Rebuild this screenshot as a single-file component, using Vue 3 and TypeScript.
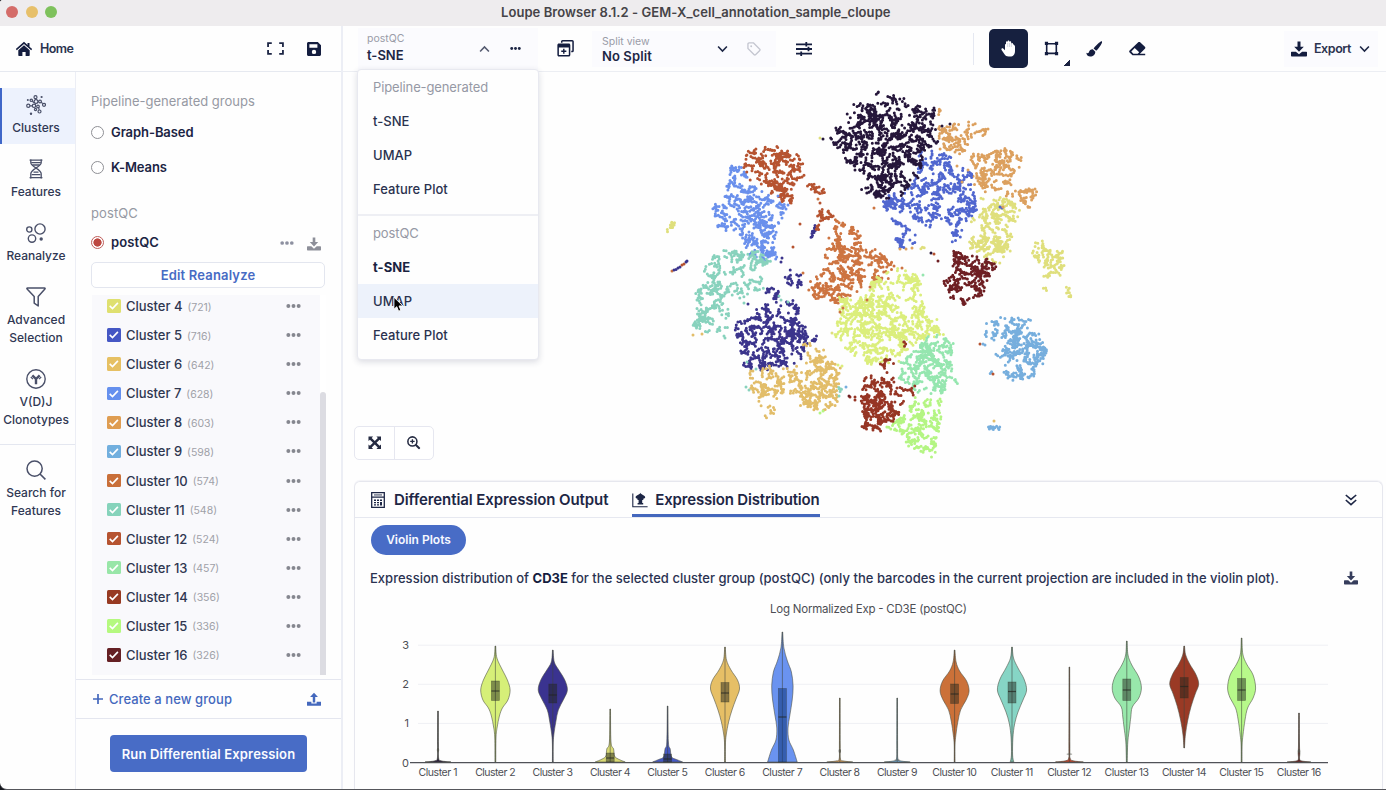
<script setup lang="ts">
interface NavItem { icon: string; lines: string[]; active?: boolean; apart?: boolean }
interface Cluster { id: number; count: number; color: string }
type Pt = [number, number]
interface Region { color: string; density: number; poly: Pt[]; hole?: [number, number, number] }
interface Violin { id: number; color: string; shape: Pt[]; box?: [number, number, number]; dot?: number }

const nav: NavItem[] = [
  { icon: 'clusters', lines: ['Clusters'], active: true },
  { icon: 'features', lines: ['Features'] },
  { icon: 'reanalyze', lines: ['Reanalyze'] },
  { icon: 'filter', lines: ['Advanced', 'Selection'] },
  { icon: 'vdj', lines: ['V(D)J', 'Clonotypes'] },
  { icon: 'search', lines: ['Search for', 'Features'], apart: true },
]

const clusters: Cluster[] = [
  { id: 4, count: 721, color: '#dfe070' },
  { id: 5, count: 716, color: '#4557c4' },
  { id: 6, count: 642, color: '#e6c063' },
  { id: 7, count: 628, color: '#6590ee' },
  { id: 8, count: 603, color: '#df9d52' },
  { id: 9, count: 598, color: '#72afde' },
  { id: 10, count: 574, color: '#c96f39' },
  { id: 11, count: 548, color: '#86d3bb' },
  { id: 12, count: 524, color: '#b65330' },
  { id: 13, count: 457, color: '#98e6a8' },
  { id: 14, count: 356, color: '#973a22' },
  { id: 15, count: 336, color: '#b5f97f' },
  { id: 16, count: 326, color: '#652024' },
]

const C: Record<number, string> = {
  1: '#25163a', 2: '#dbee7c', 3: '#3b348c', 4: '#dfdf7c', 5: '#5066cf', 6: '#e2bd69', 7: '#6a90ec', 8: '#dca05e',
  9: '#76aedd', 10: '#cd7441', 11: '#88d2bd', 12: '#b65330', 13: '#95e6af', 14: '#963524', 15: '#b4f583', 16: '#6e1f23',
}

const regions: Region[] = [
  { color: C[7], density: 0.12, poly: [[730, 167], [740, 165], [750, 180], [763, 195], [788, 205], [778, 220], [774, 240], [782, 262], [776, 268], [747, 253], [738, 230], [715, 229], [709, 203], [725, 200], [728, 183]] },
  { color: C[12], density: 0.13, poly: [[742, 163], [753, 148], [773, 146], [793, 152], [805, 168], [803, 180], [790, 187], [794, 202], [783, 205], [778, 192], [767, 193], [750, 177]] },
  { color: C[12], density: 0.16, poly: [[806, 182], [815, 183], [827, 190], [824, 195], [810, 191]] },
  { color: C[12], density: 0.17, poly: [[820, 208], [833, 210], [834, 217], [822, 221], [816, 219]] },
  { color: C[10], density: 0.2, poly: [[833, 216], [846, 224], [844, 227], [832, 219]] },
  { color: C[3], density: 0.12, poly: [[811, 224], [815, 221], [816, 230], [809, 242], [805, 238]] },
  { color: C[12], density: 0.12, poly: [[818, 222], [822, 230], [821, 239], [816, 230]] },
  { color: C[11], density: 0.095, poly: [[710, 258], [727, 250], [760, 252], [774, 262], [766, 275], [770, 290], [757, 292], [735, 298], [727, 328], [715, 332], [693, 329], [698, 316], [697, 290], [712, 283], [704, 270]] },
  { color: C[3], density: 0.125, poly: [[753, 317], [765, 303], [793, 299], [800, 310], [797, 323], [817, 338], [803, 350], [797, 363], [763, 370], [743, 367], [740, 343], [733, 332], [738, 322]] },
  { color: C[3], density: 0.12, poly: [[763, 289], [775, 286], [783, 294], [778, 299], [764, 297]] },
  { color: C[3], density: 0.08, poly: [[783, 274], [790, 268], [803, 275], [802, 288], [792, 290]] },
  { color: C[6], density: 0.115, poly: [[750, 373], [770, 366], [807, 369], [803, 342], [818, 343], [840, 370], [841, 385], [835, 409], [820, 412], [803, 405], [800, 393], [773, 393], [777, 408], [767, 417], [757, 403], [750, 390]] },
  { color: C[10], density: 0.12, poly: [[835, 226], [860, 230], [870, 247], [894, 263], [890, 277], [863, 287], [840, 303], [814, 301], [808, 290], [810, 280], [827, 268], [826, 250]] },
  { color: C[8], density: 0.08, poly: [[937, 108], [945, 110], [943, 119], [938, 118]] },
  { color: C[8], density: 0.12, poly: [[939, 127], [963, 122], [990, 130], [993, 137], [970, 140], [963, 154], [938, 147]] },
  { color: C[8], density: 0.11, poly: [[968, 159], [997, 147], [1020, 150], [1022, 160], [1013, 177], [1018, 203], [1010, 205], [1005, 188], [987, 195], [975, 183]] },
  { color: C[8], density: 0.15, poly: [[1018, 191], [1037, 187], [1038, 197], [1030, 209], [1019, 199]] },
  { color: C[5], density: 0.105, poly: [[921, 153], [943, 150], [953, 160], [975, 177], [977, 213], [963, 224], [957, 243], [953, 243], [953, 224], [927, 226], [907, 213], [887, 210], [880, 202], [903, 190], [917, 175]] },
  { color: C[5], density: 0.12, poly: [[889, 217], [902, 223], [915, 235], [917, 249], [897, 249], [895, 238], [903, 232]], hole: [906, 243, 3.5] },
  { color: C[1], density: 0.12, poly: [[881, 91], [897, 96], [910, 105], [937, 109], [933, 123], [938, 143], [922, 153], [918, 178], [902, 193], [885, 201], [860, 190], [865, 177], [843, 160], [841, 147], [829, 141], [829, 130], [847, 123], [847, 106], [868, 104], [872, 95]] },
  { color: C[4], density: 0.115, poly: [[981, 197], [1007, 198], [1020, 210], [1013, 233], [1010, 250], [997, 270], [980, 255], [966, 243], [973, 220]] },
  { color: C[4], density: 0.13, poly: [[1027, 243], [1042, 240], [1050, 251], [1062, 250], [1065, 267], [1053, 280], [1046, 277], [1037, 260]] },
  { color: C[4], density: 0.22, poly: [[1065, 287], [1069, 287], [1071, 298], [1068, 299]] },
  { color: C[4], density: 0.18, poly: [[1043, 287], [1047, 287], [1046, 292], [1043, 291]] },
  { color: C[4], density: 0.3, poly: [[666, 231], [672, 222], [676, 223], [669, 234]] },
  { color: C[4], density: 0.12, poly: [[920, 246], [928, 246], [927, 250], [920, 249]] },
  { color: C[16], density: 0.14, poly: [[950, 253], [963, 251], [992, 261], [995, 271], [985, 281], [984, 293], [963, 305], [950, 297], [943, 281], [956, 270]], hole: [968, 292, 6] },
  { color: C[2], density: 0.125, poly: [[873, 280], [897, 268], [923, 280], [920, 297], [933, 320], [946, 332], [913, 342], [897, 360], [870, 365], [860, 357], [843, 347], [833, 330], [843, 317], [838, 299], [867, 297]] },
  { color: C[13], density: 0.125, poly: [[898, 359], [915, 347], [930, 337], [952, 335], [950, 360], [958, 383], [943, 400], [920, 393], [897, 377]] },
  { color: C[15], density: 0.125, poly: [[915, 398], [944, 400], [940, 427], [936, 443], [932, 457], [903, 443], [900, 430], [887, 433], [890, 420], [907, 413]] },
  { color: C[14], density: 0.14, poly: [[865, 377], [887, 376], [907, 387], [903, 413], [883, 432], [861, 427], [863, 407], [861, 393]] },
  { color: C[14], density: 0.07, poly: [[878, 361], [893, 357], [897, 375], [886, 372]] },
  { color: C[14], density: 0.07, poly: [[908, 383], [914, 383], [920, 395], [910, 396]] },
  { color: C[14], density: 0.06, poly: [[894, 346], [904, 341], [914, 345], [902, 348]] },
  { color: C[9], density: 0.135, poly: [[988, 321], [1010, 318], [1029, 319], [1043, 340], [1047, 357], [1035, 373], [1020, 385], [1007, 379], [1005, 357], [993, 355], [1010, 339], [986, 337]] },
  { color: C[9], density: 0.1, poly: [[990, 369], [994, 369], [994, 376], [990, 376]] },
  { color: C[9], density: 0.3, poly: [[988, 426], [1000, 426], [1001, 430], [988, 430]] },
  { color: C[11], density: 0.12, poly: [[838, 386], [844, 387], [842, 396], [837, 398]] },
]

const strays: [number, number, string][] = [
  [672, 271, C[10]], [674, 270, C[3]], [676, 269.5, C[3]], [678, 268, C[3]], [680, 267, C[3]], [682, 265, C[12]], [684, 264, C[12]], [686, 262, C[3]], [687, 261, C[3]],
  [820, 138, C[4]], [823, 139, C[1]], [800, 224, C[12]], [793, 247, C[12]], [818, 199, C[10]], [820, 203, C[12]], [803, 273, C[10]],
  [942, 126, C[1]], [950, 124, C[1]], [874, 208, C[10]], [931, 253, C[1]], [938, 261, C[16]], [934, 254, C[12]], [832, 333, C[4]],
  [850, 397, C[14]], [855, 400, C[14]], [855, 397, C[14]], [849, 396, C[16]], [993, 374, C[12]], [980, 344, C[12]], [983, 344, C[9]],
  [985, 345, C[9]], [994, 421, C[6]], [693, 335, C[6]], [702, 334, C[6]], [725, 338, C[11]], [724, 336, C[11]], [744, 303, C[11]],
  [748, 304, C[3]], [820, 413, C[15]], [823, 411, C[15]], [1000, 207, C[5]], [1002, 208, C[5]], [1003, 207, C[8]], [962, 182, C[8]],
  [957, 166, C[8]], [968, 170, C[8]], [782, 258, C[3]], [781, 262, C[3]], [846, 387, C[9]], [746, 387, C[11]], [749, 390, C[11]],
  [870, 287, C[10]], [867, 300, C[10]], [843, 308, C[10]], [894, 266, C[10]], [902, 268, C[10]], [840, 312, C[10]], [923, 275, C[13]],
  [900, 249, C[8]], [906, 249, C[8]], [912, 248, C[8]], [788, 205, C[7]], [786, 209, C[7]], [782, 218, C[7]], [778, 196, C[7]],
  [838, 365, C[2]], [842, 366, C[2]], [756, 369, C[11]], [747, 362, C[11]], [779, 296, C[11]], [781, 300, C[11]], [788, 302, C[11]],
]

function rng(seed: number): () => number {
  let s = seed >>> 0
  return () => {
    s = (s + 0x6d2b79f5) >>> 0
    let t = s
    t = Math.imul(t ^ (t >>> 15), t | 1)
    t ^= t + Math.imul(t ^ (t >>> 7), t | 61)
    return ((t ^ (t >>> 14)) >>> 0) / 4294967296
  }
}

function inside(x: number, y: number, p: Pt[]): boolean {
  let hit = false
  for (let i = 0, j = p.length - 1; i < p.length; j = i++) {
    const [xi, yi] = p[i]
    const [xj, yj] = p[j]
    if (yi > y !== yj > y && x < ((xj - xi) * (y - yi)) / (yj - yi) + xi) hit = !hit
  }
  return hit
}

function area(p: Pt[]): number {
  let a = 0
  for (let i = 0, j = p.length - 1; i < p.length; j = i++) a += p[j][0] * p[i][1] - p[i][0] * p[j][1]
  return Math.abs(a / 2)
}

/* Cells sit in short winding strands with a slightly ragged cluster edge. */
function scatter(r: Region, seed: number): string {
  const rand = rng(seed * 7919 + 13)
  const xs = r.poly.map((q) => q[0])
  const ys = r.poly.map((q) => q[1])
  const x0 = Math.min(...xs)
  const y0 = Math.min(...ys)
  const w = Math.max(...xs) - x0
  const h = Math.max(...ys) - y0
  const size = area(r.poly)
  const rag = size > 500 ? 5 : 1
  const total = Math.round(size * r.density)
  let d = ''
  let n = 0
  let guard = 0
  while (n < total && guard++ < 20000) {
    let x = x0 + rand() * w
    let y = y0 + rand() * h
    let dir = rand() * Math.PI * 2
    const len = 1 + Math.floor(rand() * 5)
    for (let k = 0; k < len && n < total; k++) {
      const holed = r.hole && Math.hypot(x - r.hole[0], y - r.hole[1]) < r.hole[2]
      if (inside(x + (rand() - 0.5) * rag, y + (rand() - 0.5) * rag, r.poly) && !holed) {
        d += `M${x.toFixed(1)} ${y.toFixed(1)}h0`
        n++
      }
      dir += (rand() - 0.5) * 2.2
      x += Math.cos(dir) * 2.3
      y += Math.sin(dir) * 2.3
    }
  }
  return d
}
const layers = regions.map((r, i) => ({ color: r.color, d: scatter(r, i + 1) }))

const violins: Violin[] = [
  { id: 1, color: '#25163a', shape: [[711, 0.3], [745, 0.4], [758, 0.6], [760.8, 3], [762, 13]], dot: 750 },
  { id: 2, color: '#d6ef78', shape: [[646, 0.3], [658, 1.5], [670, 7], [680, 12], [690, 14.7], [700, 12.5], [708, 7], [716, 4], [727, 1.8], [738, 0.6], [762, 0.4]], box: [681, 700.5, 691] },
  { id: 3, color: '#3a3390', shape: [[650, 0.3], [662, 1.5], [670, 6], [680, 12], [690, 14.6], [699, 11], [710, 5.5], [722, 3], [735, 1], [745, 0.4], [762, 0.4]], box: [684, 703, 695] },
  { id: 4, color: '#d9da75', shape: [[709, 0.3], [742, 0.8], [749, 3.4], [756, 4.3], [759, 8], [762, 15]], box: [753, 762, 758] },
  { id: 5, color: '#4659c6', shape: [[706, 0.3], [742, 0.8], [749, 2.6], [757, 4], [759.5, 9], [762, 15]], box: [754, 762, 759] },
  { id: 6, color: '#e6bf66', shape: [[647, 0.3], [660, 1.5], [670, 6], [680, 12.5], [689, 14.5], [699, 11], [710, 7], [722, 3.6], [735, 1.2], [745, 0.4], [762, 0.4]], box: [682.5, 702, 693] },
  { id: 7, color: '#6a93f0', shape: [[632, 0.3], [648, 1.5], [661, 5], [672, 9], [686, 10.7], [700, 9.8], [715, 7.5], [728, 5.6], [740, 6.5], [750, 11], [762, 14.8]], box: [688.5, 762, 717] },
  { id: 8, color: '#dca05e', shape: [[698, 0.3], [745, 0.4], [759, 0.7], [761, 4], [762, 13]], dot: 751 },
  { id: 9, color: '#76aedd', shape: [[698, 0.3], [745, 0.4], [759, 0.8], [761, 4], [762, 13]], dot: 760 },
  { id: 10, color: '#cb7139', shape: [[650, 0.3], [662, 1.5], [671, 5], [681, 12], [691, 14.5], [700, 11.5], [710, 6], [722, 3.2], [735, 1.3], [745, 0.4], [762, 0.4]], box: [684, 703.5, 694] },
  { id: 11, color: '#86d5c5', shape: [[647, 0.3], [658, 1.5], [668, 6], [679, 12], [690, 14.6], [700, 11], [712, 6], [724, 2.6], [738, 0.9], [755, 0.6], [762, 1.8]], box: [682, 703, 691.5] },
  { id: 12, color: '#c0442d', shape: [[667, 0.3], [745, 0.5], [758, 0.7], [760.8, 4], [762, 14]], dot: 754 },
  { id: 13, color: '#98e8ab', shape: [[641, 0.3], [655, 1.2], [665, 5], [677, 12], [688, 14.6], [698, 12], [707, 5.5], [717, 4], [727, 2.8], [742, 1], [762, 0.4]], box: [679, 700.5, 690] },
  { id: 14, color: '#9a3a25', shape: [[646, 0.3], [655, 1.5], [664, 5.5], [674, 11.5], [684, 14.5], [694, 11], [706, 7], [720, 3.6], [735, 1.2], [748, 0.3]], box: [677.5, 698, 686.5] },
  { id: 15, color: '#b7f98a', shape: [[638, 0.3], [654, 1.2], [664, 5], [675, 11.5], [688, 14], [698, 11.5], [708, 6], [720, 3.4], [735, 1.4], [745, 0.5], [762, 0.4]], box: [678.5, 700.5, 690] },
  { id: 16, color: '#6e1f23', shape: [[713, 0.3], [745, 0.5], [753, 0.9], [759, 0.6], [761, 3], [762, 12]], dot: 751 },
]

const cx = (id: number): number => 438 + 57.4 * (id - 1)

function smooth(p: Pt[]): string {
  let d = ''
  for (let i = 0; i < p.length - 1; i++) {
    const a = p[Math.max(i - 1, 0)]
    const b = p[i]
    const c = p[i + 1]
    const e = p[Math.min(i + 2, p.length - 1)]
    d += `C${b[0] + (c[0] - a[0]) / 6} ${b[1] + (c[1] - a[1]) / 6} ${c[0] - (e[0] - b[0]) / 6} ${c[1] - (e[1] - b[1]) / 6} ${c[0]} ${c[1]}`
  }
  return d
}

function violinPath(v: Violin): string {
  const x = cx(v.id)
  const right: Pt[] = v.shape.map(([y, w]) => [x + w, y])
  const left: Pt[] = v.shape.map(([y, w]) => [x - w, y] as Pt).reverse()
  return `M${right[0][0]} ${right[0][1]}${smooth(right)}L${left[0][0]} ${left[0][1]}${smooth(left)}Z`
}

const ticks = [3, 2, 1, 0].map((v) => ({ v, y: 762.5 - 39.1 * v }))
</script>

<template>
  <div class="window">
    <svg class="defs" width="0" height="0" aria-hidden="true">
      <symbol id="home" viewBox="0 0 18 16"><path d="M9 .8 .8 8.1l1 1.1L9 2.9l7.2 6.3 1-1.1-2.7-2.4V2h-2v1.9z" fill="currentColor" /><path d="M9 4.3 3.3 9.2v5.1c0 .4.3.7.7.7h3.4v-4h3.2v4H14c.4 0 .7-.3.7-.7V9.2z" fill="currentColor" /></symbol>
      <symbol id="corners" viewBox="0 0 16 12"><path d="M4.5 1H1v3.5M11.5 1H15v3.5M1 7.5V11h3.5M15 7.5V11h-3.5" fill="none" stroke="currentColor" stroke-width="1.7" /></symbol>
      <symbol id="save" viewBox="0 0 14 14"><path fill-rule="evenodd" d="M1.5 0h9.3L14 3.2v9.3c0 .8-.7 1.5-1.5 1.5h-11C.7 14 0 13.3 0 12.5v-11C0 .7.7 0 1.5 0zM2.4 2.2v3.6h8V2.2zM7 7.7a2.2 2.2 0 1 0 0 4.4 2.2 2.2 0 0 0 0-4.4z" fill="currentColor" /></symbol>
      <symbol id="clusters" viewBox="0 0 20 20"><g fill="none" stroke="currentColor" stroke-width="1.2"><circle cx="9.5" cy="2.2" r="1.5" /><circle cx="5.3" cy="5.3" r="1.2" /><circle cx="10" cy="6.5" r="1.9" /><circle cx="14" cy="6.5" r="1.4" /><circle cx="2.3" cy="10.8" r="1.6" /><circle cx="8" cy="10.8" r="1.7" /><circle cx="18" cy="9.8" r="1.5" /><circle cx="12" cy="11.5" r="1.3" /><circle cx="13.5" cy="16.5" r="1.5" /><circle cx="9.5" cy="14.5" r="1.1" /><path d="M9.8 3.7v1M6.2 6.2l2 1.5M3.9 10.8h2.4M9 9.4l.5-1M12.6 12.7l.6 2.2M15.2 7.2l1.5 1.5" /></g><g fill="currentColor"><circle cx="15.6" cy="2" r="1.1" /><circle cx="1.8" cy="5" r="1" /><circle cx="5" cy="18.8" r="1.2" /></g></symbol>
      <symbol id="features" viewBox="0 0 14 20"><g fill="none" stroke="currentColor" stroke-width="1.3"><path d="M1.8.5v3.2c0 4 10.4 6.5 10.4 11v4.8M12.2.5v3.2c0 4-10.4 6.5-10.4 11v4.8" /><path d="M.6 1.2h12.8M2.2 3.6h9.6M3.2 6h7.6M4.5 13.2h5M2.6 15.6h8.8M.6 18.6h12.8" /></g></symbol>
      <symbol id="reanalyze" viewBox="0 0 20 20"><g fill="none" stroke="currentColor" stroke-width="1.4"><circle cx="14" cy="6" r="5.1" /><circle cx="3.3" cy="6.5" r="2.6" /><circle cx="6" cy="15.6" r="3.7" /></g><circle cx="15.2" cy="16" r="1.7" fill="currentColor" /></symbol>
      <symbol id="filter" viewBox="0 0 20 20"><path d="M1.5 1h17c.6 0 .8.6.4 1L12.2 9.5V19l-4-2.8V9.5L1.1 2c-.4-.4-.2-1 .4-1z" fill="none" stroke="currentColor" stroke-width="1.5" stroke-linejoin="round" /></symbol>
      <symbol id="vdj" viewBox="0 0 20 20"><circle cx="10" cy="10" r="9.2" fill="none" stroke="currentColor" stroke-width="1.4" /><path d="M10 15.2V10L6.3 6.3M10 10l3.7-3.7" fill="none" stroke="currentColor" stroke-width="2.4" /><path d="M4.8 8 7 10.2M15.2 8 13 10.2" stroke="currentColor" stroke-width="1.2" /></symbol>
      <symbol id="search" viewBox="0 0 20 20"><circle cx="8.6" cy="8.6" r="7.6" fill="none" stroke="currentColor" stroke-width="1.5" /><path d="m14 14 5.4 5.4" stroke="currentColor" stroke-width="1.6" /></symbol>
      <symbol id="download" viewBox="0 0 16 16"><path d="M6.5.5h3v5.3h3.3L8 10.8l-4.8-5h3.3z" fill="currentColor" /><path d="M.6 10.7h4.3L8 13.3l3.1-2.6h4.3c.3 0 .6.3.6.6v3.4c0 .5-.3.8-.8.8H.8c-.5 0-.8-.3-.8-.8v-3.4c0-.3.3-.6.6-.6z" fill="currentColor" /></symbol>
      <symbol id="upload" viewBox="0 0 16 16"><path d="M6.6 12h2.8V5.8h3.1L8 .8l-4.5 5h3.1z" fill="currentColor" /><path d="M0 11.2h5v2h6v-2h5V15c0 .4-.3.7-.7.7H.7c-.4 0-.7-.3-.7-.7z" fill="currentColor" /></symbol>
      <symbol id="dots" viewBox="0 0 16 6"><g fill="currentColor"><circle cx="2.5" cy="3" r="2.1" /><circle cx="8" cy="3" r="2.1" /><circle cx="13.5" cy="3" r="2.1" /></g></symbol>
      <symbol id="stack" viewBox="0 0 18 18"><path d="M5 2.8V1.7C5 1.2 5.4.8 5.9.8h10.2c.5 0 .9.4.9.9v9.6c0 .5-.4.9-.9.9h-1" fill="none" stroke="currentColor" stroke-width="1.6" /><path fill-rule="evenodd" d="M2 3.8h10.5c.9 0 1.6.7 1.6 1.6v10.4c0 .9-.7 1.6-1.6 1.6H2c-.9 0-1.6-.7-1.6-1.6V5.4c0-.9.7-1.6 1.6-1.6zM2 8v7.8h10.5V8z" fill="currentColor" /><path d="M7.2 9.2v5.4M4.5 11.9h5.4" stroke="currentColor" stroke-width="1.5" /></symbol>
      <symbol id="chevron" viewBox="0 0 12 8"><path d="m1.2 1.3 4.8 5 4.8-5" fill="none" stroke="currentColor" stroke-width="1.7" /></symbol>
      <symbol id="tag" viewBox="0 0 15 15"><path d="M1 2.2V7l6.7 6.6c.4.4 1 .4 1.4 0l4.6-4.5c.4-.4.4-1 0-1.4L7 1H2.2C1.5 1 1 1.5 1 2.2z" fill="none" stroke="currentColor" stroke-width="1.4" /><circle cx="4.5" cy="4.5" r="1" fill="currentColor" /></symbol>
      <symbol id="sliders" viewBox="0 0 16 14"><path d="M0 2.3h16M0 7h16M0 11.7h16M10.3 0v4.5M12.5 4.8v4.5M5.2 9.4V14" fill="none" stroke="currentColor" stroke-width="1.8" /></symbol>
      <symbol id="hand" viewBox="0 0 15 17"><path d="M5 8.5V2.3c0-1.3 1.6-1.3 1.6 0V1.5c0-1.3 1.8-1.3 1.8 0v.7c0-1.2 1.8-1.2 1.8.1v1.5c.2-1.1 1.8-1 1.8.2l1.6 1.5c.3.4.4.7.4 1.2v4.2c0 3.2-1.7 5.6-4.8 5.6H7.5c-1.8 0-3-.8-4-2.2L.6 10.1c-.8-1.3.7-2.5 1.8-1.4L4 10.2V4.6c0-.9 1-.9 1 0z" fill="currentColor" /><path d="M6.7 3v4M8.5 3v4M10.3 3.5V7" stroke="#98a1b9" stroke-width=".4" /></symbol>
      <symbol id="square" viewBox="0 0 14 14"><path d="M2.5 2.5h9v9h-9z" fill="none" stroke="currentColor" stroke-width="1.5" /><path d="M.8.8h3v3h-3zM10.2.8h3v3h-3zM.8 10.2h3v3h-3zM10.2 10.2h3v3h-3z" fill="currentColor" /></symbol>
      <symbol id="brush" viewBox="0 0 16 16"><path d="M14.8.4c.8-.6 1.7.2 1.3 1.1-1.7 3.3-3.7 6.5-5.9 8.2L7.6 7.5C9 5.2 12 2.3 14.8.4z" fill="currentColor" /><path d="M6.8 8.3 9.3 10.7c0 3-2.2 4.8-5 4.8-2 0-3.6-.9-4-3.7.9.7 2.2.8 2.6-.5.5-1.8 2-3.1 3.9-3z" fill="currentColor" /></symbol>
      <symbol id="eraser" viewBox="0 0 17 14"><path fill-rule="evenodd" d="M9 .5.6 8.4c-.6.6-.6 1.4 0 2l2.9 2.9h12.7v-1.6h-5.3l5-4.9c.6-.6.6-1.4 0-2L11.4.5C10.8-.1 9.6-.1 9 .5zM5.7 5.9l4.5 4.4-1.5 1.4H4.3l-2-2.2z" fill="currentColor" /></symbol>
      <symbol id="expand" viewBox="0 0 14 14"><path d="M.5.5h4.8L3.8 2l3.2 3.2L10.2 2 8.7.5h4.8v4.8L12 3.8 8.8 7l3.2 3.2 1.5-1.5v4.8H8.7l1.5-1.5L7 8.8 3.8 12l1.5 1.5H.5V8.7L2 10.2 5.2 7 2 3.8.5 5.3z" fill="currentColor" /></symbol>
      <symbol id="zoomin" viewBox="0 0 14 14"><circle cx="5.6" cy="5.6" r="4.7" fill="none" stroke="currentColor" stroke-width="1.6" /><path d="m9 9 4.2 4.2" stroke="currentColor" stroke-width="2.1" /><path d="M5.6 3.3v4.6M3.3 5.6h4.6" stroke="currentColor" stroke-width="1.4" /></symbol>
      <symbol id="table" viewBox="0 0 14 16"><path d="M.7.7h12.6v14.6H.7zM.7 5.2h12.6" fill="none" stroke="currentColor" stroke-width="1.3" /><path d="M3 2.5h8v.9H3z" fill="currentColor" /><path d="M3 7.4h2v1.6H3zM6 7.4h2v1.6H6zM9 7.4h2v1.6H9zM3 9.9h2v1.4H3zM6 9.9h2v1.4H6zM9 9.9h2v3.600H9zM3 12.200h2v1.300H3zM6 12.200h2v1.300H6z" fill="currentColor" /></symbol>
      <symbol id="dist" viewBox="0 0 16 16"><path d="M.8 1.5v13.2h14.800" fill="none" stroke="currentColor" stroke-width="1.1" /><path d="M8.4 .8c.5 1.900 4.800 2.500 4.800 4.500 0 .9-.9 1.200-1.900 1.500v1.200h-1.100v3h1v1.500H5.600V11h1V8H5.500V6.800c-1-.3-1.900-.6-1.900-1.500 0-2 4.300-2.600 4.800-4.500z" fill="currentColor" /></symbol>
      <symbol id="double" viewBox="0 0 12 12"><path d="m.8 1 5.2 4.4L11.2 1M.8 6l5.2 4.6L11.2 6" fill="none" stroke="currentColor" stroke-width="1.6" /></symbol>
      <symbol id="plus" viewBox="0 0 10 10"><path d="M5 0v10M0 5h10" stroke="currentColor" stroke-width="1.7" /></symbol>
      <symbol id="check" viewBox="0 0 14 14"><path d="m2.8 7.2 2.9 2.7L11.3 4" fill="none" stroke="#fff" stroke-width="1.7" /></symbol>
    </svg>

    <header class="titlebar">
      <span class="light red" /><span class="light amber" /><span class="light green" />
      <h1>Loupe Browser 8.1.2 - GEM-X_cell_annotation_sample_cloupe</h1>
    </header>

    <div class="body">
      <section class="left">
        <div class="left-head">
          <svg class="ic-home"><use href="#home" /></svg>
          <span class="home">Home</span>
          <svg class="ic-corners"><use href="#corners" /></svg>
          <svg class="ic-save"><use href="#save" /></svg>
        </div>
        <div class="left-body">
          <nav class="rail">
            <a v-for="n in nav" :key="n.icon" class="rail-item" :class="{ active: n.active, apart: n.apart }">
              <svg><use :href="'#' + n.icon" /></svg>
              <span v-for="l in n.lines" :key="l">{{ l }}</span>
            </a>
          </nav>
          <div class="groups">
            <div class="group-label first">Pipeline-generated groups</div>
            <label class="radio-row"><i class="radio" /><span>Graph-Based</span></label>
            <label class="radio-row"><i class="radio" /><span>K-Means</span></label>
            <div class="group-label second">postQC</div>
            <div class="radio-row post">
              <i class="radio on" /><span>postQC</span>
              <svg class="post-dots"><use href="#dots" /></svg>
              <svg class="post-dl"><use href="#download" /></svg>
            </div>
            <button class="edit">Edit Reanalyze</button>
            <div class="list-wrap">
              <ul class="list">
                <li v-for="c in clusters" :key="c.id">
                  <svg class="box" :style="{ background: c.color }"><use href="#check" /></svg>
                  <span class="name">Cluster {{ c.id }}</span>
                  <span class="count">({{ c.count }})</span>
                  <svg class="row-dots"><use href="#dots" /></svg>
                </li>
              </ul>
              <div class="track"><div class="thumb" /></div>
            </div>
            <div class="create">
              <svg class="ic-plus"><use href="#plus" /></svg>
              <span>Create a new group</span>
              <svg class="ic-up"><use href="#upload" /></svg>
            </div>
            <div class="run-wrap"><button class="run">Run Differential Expression</button></div>
          </div>
        </div>
      </section>

      <section class="right">
        <div class="toolbar">
          <div class="select proj">
            <div class="stack"><small>postQC</small><b>t-SNE</b></div>
            <svg class="chev up"><use href="#chevron" /></svg>
            <svg class="tb-dots"><use href="#dots" /></svg>
            <div class="menu">
              <div class="menu-label">Pipeline-generated</div>
              <div class="menu-item">t-SNE</div>
              <div class="menu-item">UMAP</div>
              <div class="menu-item">Feature Plot</div>
              <div class="menu-sep" />
              <div class="menu-label">postQC</div>
              <div class="menu-item current">t-SNE</div>
              <div class="menu-item hover">UMAP
                <svg class="cursor" viewBox="0 0 12 18"><path d="M1 1v13.2l3.1-2.8 2 4.9 2.5-1-2-4.7h4.2z" fill="#000" stroke="#fff" stroke-width="1" /></svg>
              </div>
              <div class="menu-item">Feature Plot</div>
            </div>
          </div>
          <svg class="ic-stack"><use href="#stack" /></svg>
          <div class="select split">
            <div class="stack"><small>Split view</small><b>No Split</b></div>
            <svg class="chev"><use href="#chevron" /></svg>
            <svg class="ic-tag"><use href="#tag" /></svg>
          </div>
          <svg class="ic-sliders"><use href="#sliders" /></svg>
          <div class="tools">
            <button class="tool-on"><svg><use href="#hand" /></svg></button>
            <span class="tool-square"><svg><use href="#square" /></svg><i /></span>
            <svg class="ic-brush"><use href="#brush" /></svg>
            <svg class="ic-eraser"><use href="#eraser" /></svg>
          </div>
          <button class="export">
            <svg class="ic-dl"><use href="#download" /></svg><span>Export</span><svg class="chev"><use href="#chevron" /></svg>
          </button>
        </div>

        <div class="canvas">
          <svg class="plot" viewBox="343 72 1043 409">
            <path v-for="(l, i) in layers" :key="i" :d="l.d" :stroke="l.color" />
            <circle v-for="(s, i) in strays" :key="'s' + i" :cx="s[0]" :cy="s[1]" r="1.5" :fill="s[2]" />
          </svg>
          <div class="zoomer">
            <span><svg><use href="#expand" /></svg></span>
            <span><svg><use href="#zoomin" /></svg></span>
          </div>
        </div>

        <div class="panel">
          <div class="tabs">
            <div class="tab"><svg class="ic-table"><use href="#table" /></svg><span class="t1">Differential Expression Output</span></div>
            <div class="tab on"><svg class="ic-dist"><use href="#dist" /></svg><span class="t2">Expression Distribution</span></div>
            <svg class="ic-double"><use href="#double" /></svg>
          </div>
          <button class="pill">Violin Plots</button>
          <div class="desc">
            <p>Expression distribution of <b>CD3E</b> for the selected cluster group (postQC) (only the barcodes in the current projection are included in the violin plot).</p>
            <svg><use href="#download" /></svg>
          </div>
          <svg class="chart" viewBox="355 598 1028 190">
            <text x="868.5" y="613" class="chart-title" text-anchor="middle" textLength="197">Log Normalized Exp - CD3E (postQC)</text>
            <g v-for="t in ticks" :key="t.v">
              <line x1="418" x2="1328" :y1="t.y" :y2="t.y" class="grid" />
              <text x="409" :y="t.y + 4" class="tick" text-anchor="end">{{ t.v }}</text>
            </g>
            <line x1="410" x2="1328" y1="762.7" y2="762.7" class="axis" />
            <g v-for="v in violins" :key="v.id">
              <path :d="violinPath(v)" :fill="v.color" class="violin" />
              <line :x1="cx(v.id)" :x2="cx(v.id)" :y1="v.shape[0][0]" :y2="v.shape[v.shape.length - 1][0]" class="whisker" />
              <template v-if="v.box">
                <rect :x="cx(v.id) - 4" :y="v.box[0]" width="8" :height="v.box[1] - v.box[0]" class="quart" :class="{ blue: v.id === 7 }" />
                <line :x1="cx(v.id) - 4" :x2="cx(v.id) + 4" :y1="v.box[2]" :y2="v.box[2]" class="median" />
              </template>
              <ellipse v-if="v.dot" :cx="cx(v.id)" :cy="v.dot" :rx="v.id === 12 || v.id === 9 ? 3 : 1.2" :ry="v.id === 12 || v.id === 9 ? 0.5 : 2" class="speck" />
              <text :x="cx(v.id)" y="775.5" class="xlabel" text-anchor="middle" :textLength="v.id > 9 ? (v.id === 11 ? 42.5 : 44.5) : v.id === 1 ? 39 : 40.5">Cluster {{ v.id }}</text>
            </g>
          </svg>
        </div>
      </section>
    </div>
  </div>
</template>

<style>
body { margin: 0; background: #14161c; overflow: hidden; }
</style>

<style scoped>
* { box-sizing: border-box; }
.window { width: 1386px; height: 790px; display: flex; flex-direction: column; background: #fefefe; border-bottom: 1px solid #55565b; border-radius: 3px 0 0 7px; overflow: hidden; color: #1d2645; font-family: Inter, "Liberation Sans", sans-serif; font-weight: 500; font-size: 13px; }
svg { display: block; flex: none; }
.defs { position: absolute; }
button { font: inherit; border: 0; padding: 0; color: inherit; background: none; }

.titlebar { height: 26px; flex: none; display: flex; align-items: center; padding: 0 0 2px 6px; background: #eeecee; }
.light { width: 12px; height: 12px; border-radius: 50%; margin-right: 7.5px; }
.red { background: #d46c69; } .amber { background: #e7c06a; } .green { background: #7ec15c; }
h1 { margin: 0 0 0 436.5px; font-size: 13px; font-weight: 600; letter-spacing: 0.07px; color: #454347; white-space: nowrap; }

.body { flex: 1; display: flex; min-height: 0; }
.left { width: 343px; flex: none; display: flex; flex-direction: column; border-right: 2px solid #eceef5; }
.left-head { height: 46px; flex: none; display: flex; align-items: center; border-bottom: 1px solid #e6e9f0; padding-left: 15px; }
.ic-home { width: 18px; height: 16px; color: #141d3f; }
.home { margin-left: 7px; font-size: 12.5px; width: 220px; letter-spacing: -0.6px; font-weight: 600; color: #2b334f; }
.ic-corners { width: 17px; height: 13px; margin-left: 7px; }
.ic-save { width: 14px; height: 14px; margin-left: 23px; color: #141d3f; }
.left-body { flex: 1; display: flex; min-height: 0; }

.rail { width: 76px; flex: none; border-right: 1px solid #eceef5; padding-top: 16px; }
.rail-item { display: flex; flex-direction: column; align-items: center; padding: 7px 3px 7px 0; margin-bottom: 8px; font-size: 12px; line-height: 18px; color: #303854; }
.rail-item svg { width: 20px; height: 20px; margin-bottom: 4px; color: #4a5069; }
.rail-item.active { background: #edf2fd; border-left: 2px solid #3f67c8; padding-right: 5px; }
.rail-item.apart { position: relative; margin-top: 17px; }
.rail-item.apart::before { content: ""; position: absolute; top: -9px; left: 0; right: 0; height: 1px; background: #e4e7f0; }

.groups { flex: 1; display: flex; flex-direction: column; min-width: 0; }
.group-label { height: 18px; line-height: 18px; margin-left: 15px; color: #9699a3; font-weight: 400; }
.group-label.first { margin-top: 20px; margin-bottom: 4.5px; }
.group-label.second { margin-top: 19.5px; margin-bottom: 2px; letter-spacing: 0.1px; }
.radio-row { height: 35px; flex: none; display: flex; align-items: center; padding-left: 15px; font-weight: 600; color: #1b2443; font-size: 13px; letter-spacing: -0.08px; }
.radio { width: 13px; height: 13px; border: 1.3px solid #8f9095; border-radius: 50%; margin-right: 7px; background: #fff; }
.radio.on { border-color: #bf5d5a; background: radial-gradient(circle, #bd4841 0 3.8px, #fff 4.4px); }
.post { height: 36px; letter-spacing: 0.1px; }
.post span { width: 169px; }
.post-dots { width: 14px; height: 6px; margin-top: 2px; color: #8d90a0; }
.post-dl { width: 14px; height: 14px; margin-left: 13px; margin-top: 3px; color: #8d8f99; }
.edit { height: 26px; flex: none; margin: 2px 16px 0 15px; border: 1px solid #e3e6ef; border-radius: 5px; color: #476bc4; font-weight: 600; letter-spacing: 0.17px; background: #fff; }
.list-wrap { height: 380px; flex: none; margin: 7px 15px 0 16px; display: flex; background: #fff; overflow: hidden; }
.list { list-style: none; margin: -3.5px 0 0; padding: 0; flex: 1; background: #f9f9fc; height: 390px; }
.list li { height: 29.08px; display: flex; align-items: center; padding-left: 15px; }
.box { width: 13.5px; height: 13.5px; border-radius: 1.5px; margin-right: 5.5px; }
.name { color: #2f3650; letter-spacing: -0.02px; }
.count { margin-left: 5px; margin-top: 2px; font-size: 10.5px; font-weight: 400; color: #9fa1a8; }
.row-dots { width: 15px; height: 6px; margin: 0 19px 0 auto; color: #85878f; }
.track { width: 6px; }
.thumb { margin-top: 97px; height: 283px; width: 6px; background: #dcdce2; border-radius: 3px 3px 0 0; }
.create { height: 40px; flex: none; margin-top: 4px; border-top: 1px solid #e4e6ef; border-bottom: 1px solid #e4e6ef; display: flex; align-items: center; padding: 0 20px 0 17px; color: #4468bd; letter-spacing: 0.07px; }
.ic-plus { width: 10px; height: 10px; margin-right: 6px; }
.ic-up { width: 14px; height: 14px; margin-left: auto; }
.run-wrap { padding: 16px 34px; }
.run { width: 197px; height: 37px; border-radius: 4px; background: #486cc6; color: #fbfcff; font-weight: 600; letter-spacing: 0.15px; }

.right { flex: 1; min-width: 0; display: flex; flex-direction: column; }
.toolbar { height: 46px; flex: none; display: flex; align-items: center; border-bottom: 1px solid #eceef3; padding-left: 15px; }
.select { display: flex; align-items: center; background: #fbfbfe; height: 38px; position: relative; }
.stack { display: flex; flex-direction: column; }
.stack small { font-size: 10.5px; line-height: 13px; color: #9a9ca8; font-weight: 400; }
.stack b { font-size: 13px; line-height: 18px; font-weight: 600; }
.proj { width: 180px; height: 42px; padding-left: 9px; }
.proj .stack { width: 112px; padding-bottom: 3px; }
.proj .stack small { line-height: 15px; }
.split .stack { width: 115px; padding-top: 2px; }
.split .stack b { line-height: 16px; letter-spacing: 0.1px; }
.chev { width: 11px; height: 8px; }
.chev.up { transform: rotate(180deg); color: #555b70; }
.tb-dots { width: 11px; height: 5px; margin-left: 20px; }
.ic-stack { width: 17px; height: 17px; margin-left: 19px; color: #141d3f; }
.split { width: 184px; height: 36px; margin-left: 18px; padding-left: 10px; }
.ic-tag { width: 14px; height: 14px; margin-left: 19px; color: #c4c6d0; }
.ic-sliders { width: 16px; height: 14px; margin-left: 20px; color: #141d3f; }
.tools { display: flex; align-items: center; margin-left: 161px; border-left: 1px solid #e5e8f1; height: 32px; padding-left: 15px; color: #141d3f; }
.tool-on { width: 39px; height: 39px; border-radius: 5px; background: #16203f; display: flex; align-items: center; justify-content: center; color: #fff; }
.tool-on svg { width: 15px; height: 17px; }
.tool-square { display: block; position: relative; margin-left: 16px; }
.tool-square svg { width: 15px; height: 15px; }
.tool-square i { position: absolute; left: 19px; top: 18px; width: 7px; height: 7px; background: linear-gradient(135deg, transparent 50%, #1a2240 50%); }
.ic-brush { width: 16px; height: 16px; margin-left: 27px; }
.ic-eraser { width: 17px; height: 14px; margin-left: 27px; }
.export { display: flex; align-items: center; width: 94px; height: 36px; background: #fbfbfe; margin-left: 138px; padding-left: 7px; }
.ic-dl { width: 16px; height: 16px; margin-right: 7px; color: #141d3f; }
.export span { width: 39px; margin-right: 6px; text-align: left; font-size: 12.5px; letter-spacing: -0.45px; font-weight: 600; color: #2b334f; }

.menu { position: absolute; z-index: 3; left: -1px; top: 41px; width: 182px; height: 291px; background: #fefefe; border: 1px solid #e8e9f0; border-radius: 4px; box-shadow: 0 2px 6px rgba(40, 45, 80, 0.16); }
.menu-label, .menu-item { height: 34px; line-height: 34px; padding-left: 15px; color: #2a324f; font-size: 13px; letter-spacing: 0.04px; }
.menu-label { color: #9699a5; font-weight: 400; letter-spacing: -0.12px; }
.menu-sep { height: 2px; background: #eeeff4; margin: 8px 0 0; }
.menu-item.current { font-weight: 700; color: #1a2341; }
.menu-item.hover { background: #edf2fb; position: relative; }
.cursor { position: absolute; left: 35px; top: 12px; width: 11px; height: 17px; z-index: 4; }

.canvas { flex: 1; position: relative; min-height: 0; }
.plot { width: 1043px; height: 409px; }
.plot path { fill: none; stroke-width: 3; stroke-linecap: round; }
.zoomer { position: absolute; left: 11px; top: 354px; width: 80px; height: 34px; display: flex; border: 1px solid #e6e7f0; border-radius: 5px; background: #fff; color: #252b42; }
.zoomer span { flex: 1; display: flex; align-items: center; justify-content: center; }
.zoomer span + span { border-left: 1px solid #e6e7f0; }
.zoomer svg { width: 13.5px; height: 13.5px; }

.panel { height: 308px; flex: none; margin: 0 3px 0 11px; border: 1px solid #e6e7ee; border-bottom: 0; border-radius: 6px 6px 0 0; box-shadow: 0 -1px 1px #f3f3f7; }
.tabs { height: 36px; display: flex; align-items: stretch; border-bottom: 1px solid #e6e8f0; padding: 0 25px 0 16px; }
.tab { display: flex; align-items: center; font-size: 15px; font-weight: 600; margin-right: 24px; white-space: nowrap; letter-spacing: -0.1px; }
.tab.on { border-bottom: 3px solid #4467bd; padding-top: 3px; letter-spacing: -0.18px; }
.ic-table { width: 14px; height: 16px; margin-right: 9px; }
.ic-dist { width: 16px; height: 16px; margin-right: 7px; }
.ic-double { width: 12px; height: 12px; margin-left: auto; align-self: center; }
.pill { display: block; margin: 6.5px 0 0 16px; width: 95px; height: 30px; border-radius: 15px; background: #486cc6; color: #f6f8ff; font-weight: 600; font-size: 12px; }
.desc { height: 43.5px; display: flex; align-items: center; justify-content: space-between; padding: 4px 24px 0 15px; }
.desc p { margin: 0; white-space: nowrap; font-size: 13px; letter-spacing: 0.015px; color: #2a3251; }
.desc b { font-weight: 700; color: #141d3f; }
.desc svg { width: 14px; height: 14px; color: #363d5c; }
.chart { width: 1028px; height: 190px; }
.chart text { font-family: Inter, "Liberation Sans", sans-serif; fill: #4d4e54; font-weight: 400; }
.chart-title { font-size: 11.5px; }
.tick { font-size: 11px; }
.xlabel { font-size: 10.5px; }
.grid { stroke: #eff0f4; stroke-width: 1; }
.axis { stroke: #505258; stroke-width: 1.2; }
.violin { stroke: #4d5145; stroke-opacity: 0.65; stroke-width: 0.9; }
.whisker { stroke: #40443c; stroke-opacity: 0.55; stroke-width: 1; }
.quart { fill: #20241c; fill-opacity: 0.48; stroke: #2c3026; stroke-opacity: 0.5; stroke-width: 0.6; }
.quart.blue { fill: #123a83; fill-opacity: 0.6; }
.median { stroke: #22251f; stroke-opacity: 0.7; stroke-width: 1.2; }
.speck { fill: #55564d; fill-opacity: 0.8; }
</style>
